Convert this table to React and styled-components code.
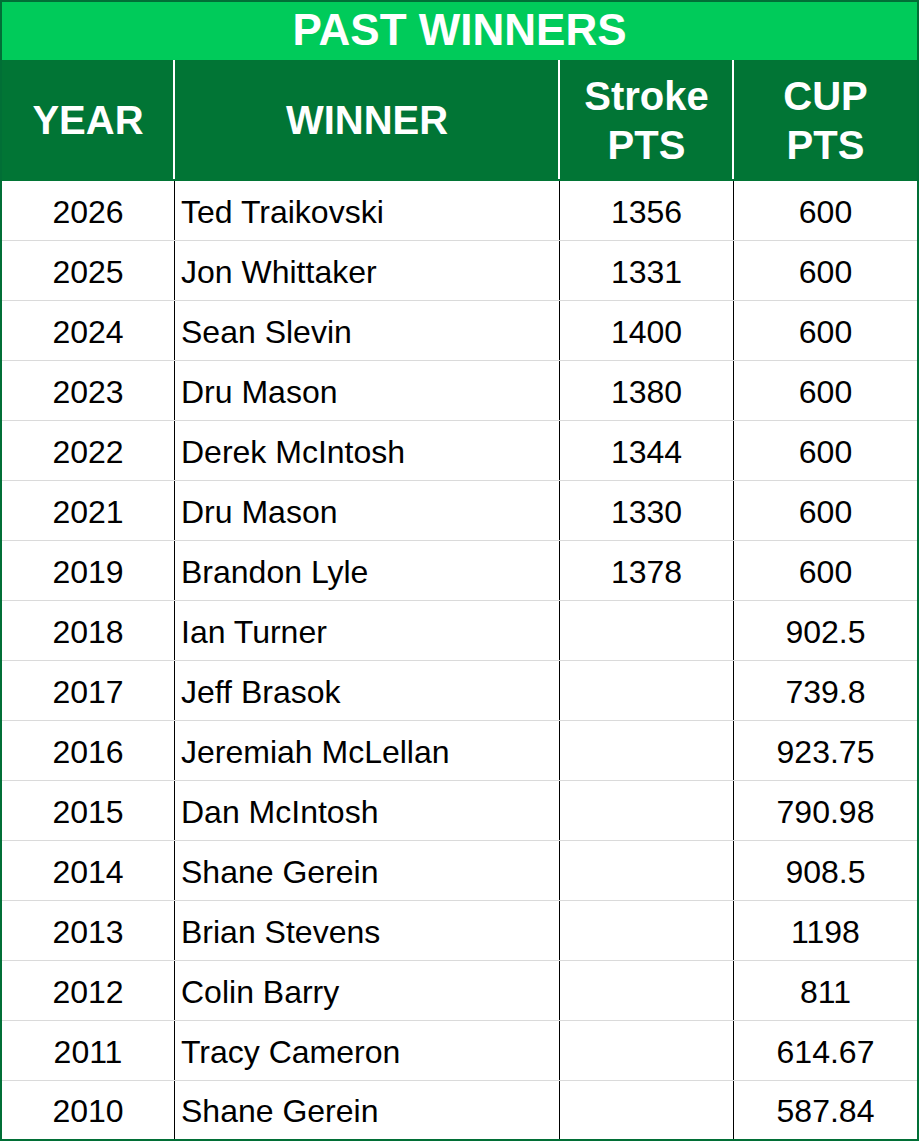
import React from "react";
import styled, { createGlobalStyle } from "styled-components";

const winners = [
  { year: "2026", name: "Ted Traikovski", stroke: "1356", cup: "600" },
  { year: "2025", name: "Jon Whittaker", stroke: "1331", cup: "600" },
  { year: "2024", name: "Sean Slevin", stroke: "1400", cup: "600" },
  { year: "2023", name: "Dru Mason", stroke: "1380", cup: "600" },
  { year: "2022", name: "Derek McIntosh", stroke: "1344", cup: "600" },
  { year: "2021", name: "Dru Mason", stroke: "1330", cup: "600" },
  { year: "2019", name: "Brandon Lyle", stroke: "1378", cup: "600" },
  { year: "2018", name: "Ian Turner", stroke: "", cup: "902.5" },
  { year: "2017", name: "Jeff Brasok", stroke: "", cup: "739.8" },
  { year: "2016", name: "Jeremiah McLellan", stroke: "", cup: "923.75" },
  { year: "2015", name: "Dan McIntosh", stroke: "", cup: "790.98" },
  { year: "2014", name: "Shane Gerein", stroke: "", cup: "908.5" },
  { year: "2013", name: "Brian Stevens", stroke: "", cup: "1198" },
  { year: "2012", name: "Colin Barry", stroke: "", cup: "811" },
  { year: "2011", name: "Tracy Cameron", stroke: "", cup: "614.67" },
  { year: "2010", name: "Shane Gerein", stroke: "", cup: "587.84" },
];

const GlobalStyle = createGlobalStyle`
  html, body {
    margin: 0;
    padding: 0;
    background: #ffffff;
  }
  body {
    font-family: "Liberation Sans", Arial, sans-serif;
  }
`;

const App = () => {
  return (
    <>
      <GlobalStyle />
      <Table>
        <Title>PAST WINNERS</Title>
        <HeaderRow>
          <HeadCell>YEAR</HeadCell>
          <HeadCell divider>WINNER</HeadCell>
          <HeadCell divider>
            Stroke
            <br />
            PTS
          </HeadCell>
          <HeadCell divider>
            CUP
            <br />
            PTS
          </HeadCell>
        </HeaderRow>
        {winners.map(({ year, name, stroke, cup }, i) => (
          <Row key={i} last={i === winners.length - 1}>
            <Cell>{year}</Cell>
            <Cell divider left>
              {name}
            </Cell>
            <Cell divider>{stroke}</Cell>
            <Cell divider>{cup}</Cell>
          </Row>
        ))}
      </Table>
    </>
  );
};

const columns = "172px 385px 174px 184px";

const Table = styled.div`
  width: 919px;
  height: 1141px;
  box-sizing: border-box;
  border: 2px solid #016f36;
  display: flex;
  flex-direction: column;
  background: #ffffff;
`;

const Title = styled.div`
  height: 58px;
  box-sizing: border-box;
  padding-bottom: 2px;
  background: #00cb5a;
  color: #ffffff;
  font-size: 44px;
  font-weight: 700;
  display: flex;
  align-items: center;
  justify-content: center;
`;

const HeaderRow = styled.div`
  display: grid;
  grid-template-columns: ${columns};
  height: 121px;
  box-sizing: border-box;
  padding-bottom: 2px;
  background: #017535;
`;

const HeadCell = styled.div`
  display: flex;
  align-items: center;
  justify-content: center;
  text-align: center;
  color: #ffffff;
  font-size: 40px;
  font-weight: 700;
  line-height: 49px;
  margin-left: ${({ divider }) => (divider ? "-1px" : "0")};
  border-left: ${({ divider }) => (divider ? "2px solid #ffffff" : "none")};
  padding-top: 2px;
`;

const Row = styled.div`
  display: grid;
  grid-template-columns: ${columns};
  height: ${({ last }) => (last ? "58px" : "60px")};
  box-sizing: border-box;
  border-bottom: ${({ last }) => (last ? "none" : "1px solid #dadada")};
`;

const Cell = styled.div`
  display: flex;
  align-items: center;
  justify-content: ${({ left }) => (left ? "flex-start" : "center")};
  padding-left: ${({ left }) => (left ? "6px" : "0")};
  padding-top: 3px;
  border-left: ${({ divider }) => (divider ? "1px solid #000000" : "none")};
  color: #000000;
  font-size: 32px;
  white-space: nowrap;
`;

export default App;
